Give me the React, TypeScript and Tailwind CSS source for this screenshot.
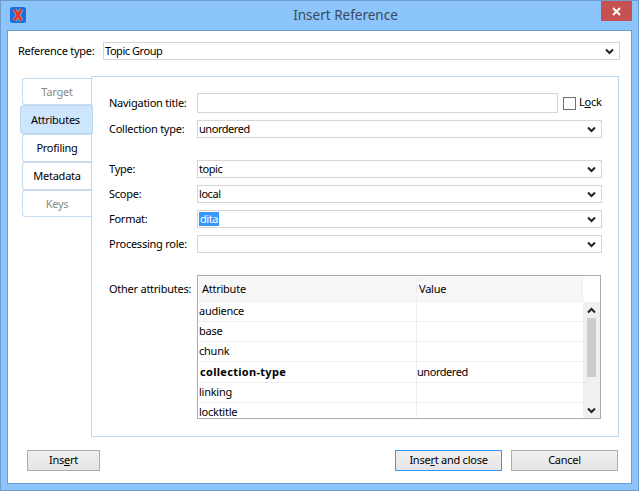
import React from "react";

const Chevron = ({ up = false }: { up?: boolean }) => (
  <svg width="9" height="7" viewBox="0 0 9 7" className="shrink-0">
    <path d={up ? "M1 5.5 L4.5 2 L8 5.5" : "M1 1.5 L4.5 5 L8 1.5"} fill="none" stroke="#222" strokeWidth="2" />
  </svg>
);

const Select = ({ value, width, selected = false }: { value: string; width: string; selected?: boolean }) => (
  <div className={`${width} h-[18px] shrink-0 flex items-center justify-between border border-[#d5d5d5] bg-white pr-[5px] pl-[1px]`}>
    {selected ? (
      <span className="bg-[#3399ff] text-white leading-[14px] h-[14px] px-[1px] tracking-[-0.45px]">{value}</span>
    ) : (
      <span className="pb-[2px] tracking-[-0.45px]">{value}</span>
    )}
    <Chevron />
  </div>
);

const Row = ({ label, className = "", children }: { label: string; className?: string; children: React.ReactNode }) => (
  <div className={`flex items-center ${className}`}>
    <span className="w-[88px] shrink-0 whitespace-nowrap pb-[2px]">{label}</span>
    {children}
  </div>
);

const Tab = ({ label, active = false, disabled = false, h, lift = false }: { label: string; active?: boolean; disabled?: boolean; h: string; lift?: boolean }) => (
  <div
    className={
      active
        ? `${h} relative z-10 -mr-[2px] flex items-center pl-[10px] bg-[#cde5fd] border border-[#bcd8f0] rounded-l-[3px]`
        : `${h} ml-[2px] flex items-center justify-center bg-white border-l border-t border-b border-[#c6dcf0] rounded-l-[3px] ${lift ? "pb-[2px]" : ""} ${disabled ? "text-[#8a8a8a]" : "text-black"}`
    }
  >
    {label}
  </div>
);

const rows: [string, string, boolean, string][] = [
  ["audience", "", false, "h-[20px]"],
  ["base", "", false, "h-[20px]"],
  ["chunk", "", false, "h-[20px]"],
  ["collection-type", "unordered", true, "h-[21px]"],
  ["linking", "", false, "h-[20px]"],
  ["locktitle", "", false, "h-[20px]"],
];

const Button = ({ children, width, focus = false }: { children: React.ReactNode; width: string; focus?: boolean }) => (
  <div className={`${width} h-[21px] flex items-center justify-center border bg-gradient-to-b from-[#f0f0f0] to-[#e5e5e5] ${focus ? "border-[#3399ff]" : "border-[#acacac]"}`}>
    <span className="pb-[2px]">{children}</span>
  </div>
);

export default function App() {
  return (
    <div className="w-[639px] h-[491px] flex flex-col border border-[#6e9ccb] bg-[#8bc5fb] text-[11px] tracking-[-0.25px] leading-none text-black font-['Noto_Sans',sans-serif] overflow-hidden">
      <div className="h-[29px] shrink-0 flex items-start">
        <div className="ml-[9px] mt-[6px] w-[16px] h-[16px] shrink-0">
          <svg width="16" height="16" viewBox="0 0 16 16">
            <rect x="0" y="0" width="16" height="16" rx="2.5" fill="#1c6fd6" />
            <path d="M4.5 2.5 L11.5 13.5 M11.5 2.5 L4.5 13.5" stroke="#fff" strokeWidth="4" opacity="0.55" />
            <path d="M4.5 2.5 L11.5 13.5 M11.5 2.5 L4.5 13.5" stroke="#e8341c" strokeWidth="2.6" />
          </svg>
        </div>
        <div className="flex-1 h-[29px] flex items-center justify-center pl-[64px] pt-[1px] text-[13.5px] tracking-normal text-[#3a4a57]">Insert Reference</div>
        <div className="w-[31px] h-[20px] mr-[6px] shrink-0 flex items-center justify-center bg-[#c75050]">
          <svg width="9" height="9" viewBox="0 0 9 9">
            <path d="M1 1 L8 8 M8 1 L1 8" stroke="#fff" strokeWidth="2" />
          </svg>
        </div>
      </div>
      <div className="mx-[6px] h-[454px] shrink-0 border border-[#6e9ccb] bg-white flex flex-col">
        <div className="mt-[11px] ml-[10px] flex items-center">
          <span className="w-[85px] shrink-0 whitespace-nowrap pb-[2px]">Reference type:</span>
          <Select value="Topic Group" width="w-[517px]" />
        </div>
        <div className="mt-[16px] ml-[12px] flex items-start">
          <div className="w-[71px] shrink-0 pt-[2px] flex flex-col">
            <Tab label="Target" disabled h="h-[27px]" />
            <Tab label="Attributes" active h="h-[29px]" />
            <Tab label="Profiling" h="h-[28px]" lift />
            <Tab label="Metadata" h="h-[28px]" lift />
            <Tab label="Keys" disabled h="h-[27px]" />
          </div>
          <div className="w-[528px] h-[361px] shrink-0 border border-[#bcd8f0] pl-[17px] pt-[16px]">
            <Row label="Navigation title:">
              <div className="w-[361px] h-[20px] border border-[#d5d5d5] bg-white" />
              <div className="ml-[5px] w-[13px] h-[13px] border border-[#707070] bg-white" />
              <span className="ml-[3px] pb-[3px]">L<span className="underline">o</span>ck</span>
            </Row>
            <Row label="Collection type:" className="mt-[7px]">
              <Select value="unordered" width="w-[405px]" />
            </Row>
            <Row label="Type:" className="mt-[22px]">
              <Select value="topic" width="w-[405px]" />
            </Row>
            <Row label="Scope:" className="mt-[7px]">
              <Select value="local" width="w-[405px]" />
            </Row>
            <Row label="Format:" className="mt-[7px]">
              <Select value="dita" width="w-[405px]" selected />
            </Row>
            <Row label="Processing role:" className="mt-[7px]">
              <Select value="" width="w-[405px]" />
            </Row>
            <div className="mt-[22px] flex items-start">
              <span className="w-[88px] shrink-0 mt-[8px] whitespace-nowrap">Other attributes:</span>
              <div className="w-[404px] h-[144px] border border-[#acacac] flex overflow-hidden bg-white">
                <div className="w-[385px] shrink-0 flex flex-col overflow-hidden">
                  <div className="h-[26px] shrink-0 flex pl-[1px] pt-[1px]">
                    <div className="w-[218px] h-[25px] flex items-center pl-[3px] pb-[1px] bg-[#f7f7f7] border-r border-b border-[#efefef]">Attribute</div>
                    <div className="flex-1 h-[25px] flex items-center pl-[2px] pb-[1px] bg-[#f7f7f7] border-r border-b border-[#efefef]">Value</div>
                  </div>
                  {rows.map(([k, v, bold, h]) => (
                    <div key={k} className={`${h} shrink-0 flex border-b border-[#efefef]`}>
                      <div className={`w-[219px] shrink-0 flex items-center pb-[2px] ${bold ? "font-bold pl-[2px] tracking-[0.3px]" : "pl-[1px]"} border-r border-[#efefef]`}>{k}</div>
                      <div className="flex-1 flex items-center pb-[2px] tracking-[-0.45px]">{v}</div>
                    </div>
                  ))}
                </div>
                <div className="flex-1 flex flex-col">
                  <div className="h-[26px] shrink-0 bg-white" />
                  <div className="flex-1 bg-[#f0f0f0] flex flex-col items-center">
                    <div className="h-[16px] shrink-0 flex items-center"><Chevron up /></div>
                    <div className="w-[9px] h-[59px] shrink-0 bg-[#cdcdcd]" />
                    <div className="mt-auto h-[15px] flex items-center"><Chevron /></div>
                  </div>
                </div>
              </div>
            </div>
          </div>
        </div>
        <div className="mt-[13px] pl-[19px] pr-[13px] flex items-center">
          <Button width="w-[73px]">Ins<span className="underline">e</span>rt</Button>
          <div className="ml-auto flex gap-[9px]">
            <Button width="w-[107px]" focus>Inse<span className="underline">r</span>t and close</Button>
            <Button width="w-[107px]">Cancel</Button>
          </div>
        </div>
      </div>
    </div>
  );
}
